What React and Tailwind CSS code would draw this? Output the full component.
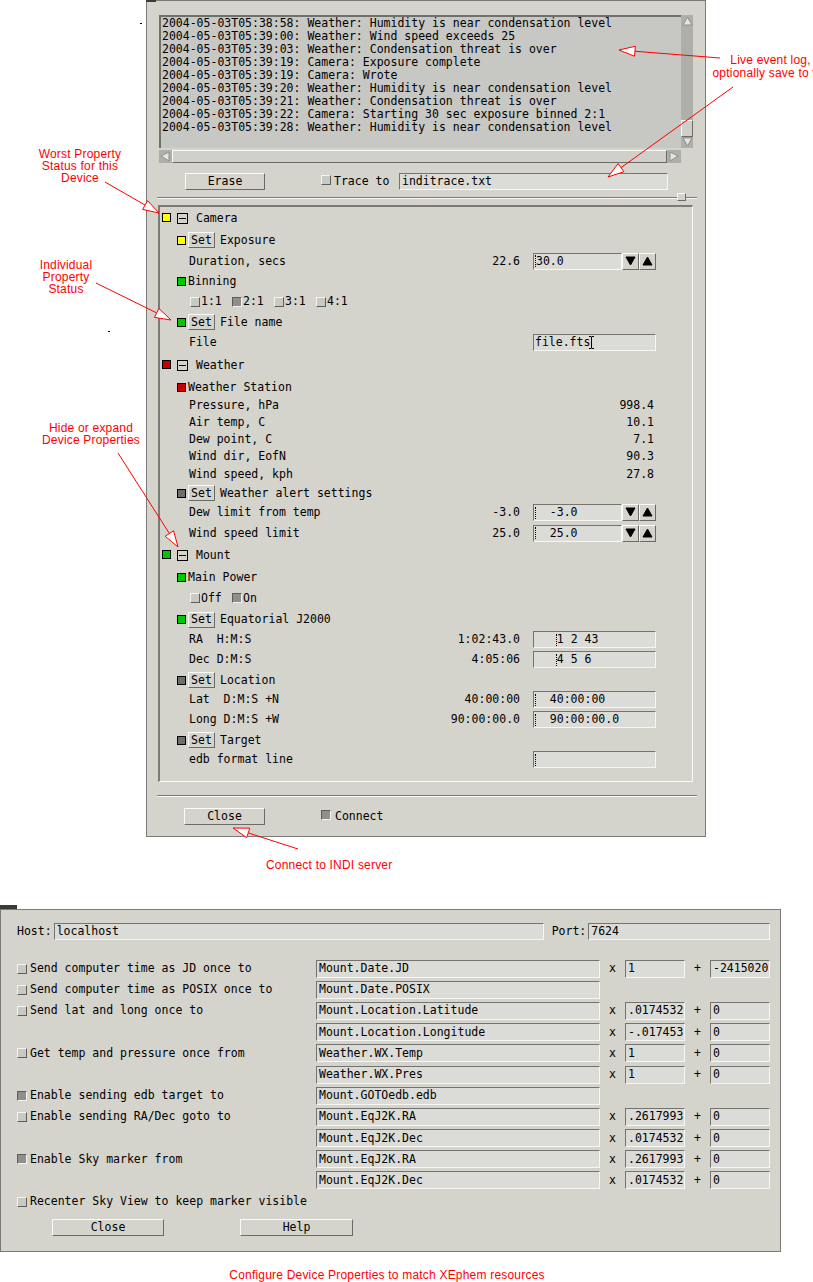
import React from 'react';

const raised = 'border border-t-[#fbfbf8] border-l-[#fbfbf8] border-r-[#6a6a66] border-b-[#6a6a66]';
const sunken = 'border border-t-[#73736f] border-l-[#73736f] border-r-[#f6f6f2] border-b-[#f6f6f2] bg-[#dbdbd7]';

const YELLOW = 'bg-[#ffff00]';
const GREEN = 'bg-[#00c800]';
const RED = 'bg-[#c80000]';
const GREY = 'bg-[#6e6e6e]';

const LOG = [
  '2004-05-03T05:38:58: Weather: Humidity is near condensation level',
  '2004-05-03T05:39:00: Weather: Wind speed exceeds 25',
  '2004-05-03T05:39:03: Weather: Condensation threat is over',
  '2004-05-03T05:39:19: Camera: Exposure complete',
  '2004-05-03T05:39:19: Camera: Wrote',
  '2004-05-03T05:39:20: Weather: Humidity is near condensation level',
  '2004-05-03T05:39:21: Weather: Condensation threat is over',
  '2004-05-03T05:39:22: Camera: Starting 30 sec exposure binned 2:1',
  '2004-05-03T05:39:28: Weather: Humidity is near condensation level',
];

// rows of the property panel, top to bottom
const PROPS = [
  { t: 'device', h: 'h-[22px]', c: YELLOW, label: 'Camera' },
  { t: 'prop', h: 'h-[22px]', c: YELLOW, set: true, label: 'Exposure' },
  { t: 'elem', h: 'h-[20px]', label: 'Duration, secs', value: '22.6', input: '30.0', spin: true },
  { t: 'prop', h: 'h-[20px]', c: GREEN, label: 'Binning' },
  { t: 'opts', h: 'h-[21px]', opts: [['1:1', false], ['2:1', true], ['3:1', false], ['4:1', false]] },
  { t: 'prop', h: 'h-[20px]', c: GREEN, set: true, label: 'File name' },
  { t: 'elem', h: 'h-[21px]', label: 'File', input: 'file.fts', ibeam: true, nocaret: true },
  { t: 'device', h: 'h-[24px]', c: RED, label: 'Weather' },
  { t: 'prop', h: 'h-[20px]', c: RED, label: 'Weather Station' },
  { t: 'elem', h: 'h-[17px]', label: 'Pressure, hPa', value: '998.4' },
  { t: 'elem', h: 'h-[17px]', label: 'Air temp, C', value: '10.1' },
  { t: 'elem', h: 'h-[17px]', label: 'Dew point, C', value: '7.1' },
  { t: 'elem', h: 'h-[17px]', label: 'Wind dir, EofN', value: '90.3' },
  { t: 'elem', h: 'h-[18px]', label: 'Wind speed, kph', value: '27.8' },
  { t: 'prop', h: 'h-[20px]', c: GREY, set: true, label: 'Weather alert settings' },
  { t: 'elem', h: 'h-[19px]', label: 'Dew limit from temp', value: '-3.0', input: '  -3.0', spin: true },
  { t: 'elem', h: 'h-[22px]', label: 'Wind speed limit', value: '25.0', input: '  25.0', spin: true },
  { t: 'device', h: 'h-[23px]', c: GREEN, label: 'Mount' },
  { t: 'prop', h: 'h-[20px]', c: GREEN, label: 'Main Power' },
  { t: 'opts', h: 'h-[22px]', opts: [['Off', false], ['On', true]] },
  { t: 'prop', h: 'h-[21px]', c: GREEN, set: true, label: 'Equatorial J2000' },
  { t: 'elem', h: 'h-[19px]', label: 'RA  H:M:S', value: '1:02:43.0', pre: '   ', input: '1 2 43' },
  { t: 'elem', h: 'h-[21px]', label: 'Dec D:M:S', value: '4:05:06', pre: '   ', input: '4 5 6' },
  { t: 'prop', h: 'h-[20px]', c: GREY, set: true, label: 'Location' },
  { t: 'elem', h: 'h-[19px]', label: 'Lat  D:M:S +N', value: '40:00:00', input: '  40:00:00' },
  { t: 'elem', h: 'h-[21px]', label: 'Long D:M:S +W', value: '90:00:00.0', input: '  90:00:00.0' },
  { t: 'prop', h: 'h-[20px]', c: GREY, set: true, label: 'Target' },
  { t: 'elem', h: 'h-[19px]', label: 'edb format line', input: '' },
];

const LINKS = [
  { on: false, label: 'Send computer time as JD once to', field: 'Mount.Date.JD', mul: '1', add: '-2415020' },
  { on: false, label: 'Send computer time as POSIX once to', field: 'Mount.Date.POSIX' },
  { on: false, label: 'Send lat and long once to', field: 'Mount.Location.Latitude', mul: '.0174532', add: '0' },
  { field: 'Mount.Location.Longitude', mul: '-.017453', add: '0' },
  { on: false, label: 'Get temp and pressure once from', field: 'Weather.WX.Temp', mul: '1', add: '0' },
  { field: 'Weather.WX.Pres', mul: '1', add: '0' },
  { on: true, label: 'Enable sending edb target to', field: 'Mount.GOTOedb.edb' },
  { on: false, label: 'Enable sending RA/Dec goto to', field: 'Mount.EqJ2K.RA', mul: '.2617993', add: '0' },
  { field: 'Mount.EqJ2K.Dec', mul: '.0174532', add: '0' },
  { on: true, label: 'Enable Sky marker from', field: 'Mount.EqJ2K.RA', mul: '.2617993', add: '0' },
  { field: 'Mount.EqJ2K.Dec', mul: '.0174532', add: '0' },
  { on: false, label: 'Recenter Sky View to keep marker visible' },
];

function Toggle({ on }) {
  return (
    <span
      className={`inline-block w-[10px] h-[10px] shrink-0 border ${
        on
          ? 'bg-[#8f8f8b] border-t-[#5d5d5a] border-l-[#5d5d5a] border-b-[#f4f4f0] border-r-[#f4f4f0]'
          : 'bg-[#c9c9c4] border-t-[#f4f4f0] border-l-[#f4f4f0] border-b-[#5d5d5a] border-r-[#5d5d5a]'
      }`}
    />
  );
}

function Status({ c }) {
  return <span className={`inline-block w-[9px] h-[9px] shrink-0 border border-black ${c}`} />;
}

function Caret() {
  return <span className="inline-block w-px h-[12px] border-l border-dotted border-black" />;
}

function IBeam() {
  return (
    <svg width="7" height="15" viewBox="0 0 7 15" className="shrink-0 -ml-[2px]">
      <path d="M1 1.5h2M4 1.5h2M3.5 1.5v12M1 13.5h2M4 13.5h2" stroke="#000" strokeWidth="1" fill="none" />
    </svg>
  );
}

function Tri({ dir, solid }) {
  const pts = {
    up: '5.5,1 10,9 1,9',
    down: '1,1 10,1 5.5,9',
    left: '1,5 9,1 9,10',
    right: '9,5 1,1 1,10',
  }[dir];
  return (
    <svg width="11" height="11" viewBox="0 0 11 11">
      <polygon
        points={pts}
        fill={solid ? '#000' : '#e4e4e0'}
        stroke={solid ? '#000' : '#8e8e8a'}
        strokeWidth="1"
      />
    </svg>
  );
}

function PropRow({ r }) {
  if (r.t === 'device') {
    return (
      <div className={`flex items-center ${r.h}`}>
        <span className="ml-[2px]">
          <Status c={r.c} />
        </span>
        <span className="ml-[6px] w-[11px] h-[11px] border border-black flex items-center justify-center">
          <span className="w-[7px] h-px bg-black" />
        </span>
        <span className="ml-[8px]">{r.label}</span>
      </div>
    );
  }
  if (r.t === 'prop') {
    return (
      <div className={`flex items-center pl-[17px] ${r.h}`}>
        <Status c={r.c} />
        {r.set ? (
          <>
            <span className={`ml-[2px] w-[27px] h-[16px] ${raised} flex items-center justify-center`}>Set</span>
            <span className="ml-[5px]">{r.label}</span>
          </>
        ) : (
          <span className="ml-[2px]">{r.label}</span>
        )}
      </div>
    );
  }
  if (r.t === 'opts') {
    return (
      <div className={`flex items-center pl-[30px] ${r.h}`}>
        {r.opts.map(([l, on]) => (
          <span key={l} className="w-[42px] flex items-center">
            <Toggle on={on} />
            <span className="ml-px">{l}</span>
          </span>
        ))}
      </div>
    );
  }
  const hasInput = r.input !== undefined;
  return (
    <div className={`flex items-center ${r.h}`}>
      <div className={`flex justify-between pl-[29px] whitespace-pre ${hasInput ? 'w-[360px]' : 'w-[494px]'}`}>
        <span>{r.label}</span>
        <span>{r.value}</span>
      </div>
      {hasInput && (
        <div className="ml-[13px] flex">
          <div
            className={`${r.spin ? 'w-[89px]' : 'w-[123px]'} h-[17px] ${sunken} flex items-center pl-px whitespace-pre overflow-hidden`}
          >
            {r.pre && <span>{r.pre}</span>}
            {!r.nocaret && <Caret />}
            <span>{r.input}</span>
            {r.ibeam && <IBeam />}
          </div>
          {r.spin && (
            <>
              <span className={`w-[17px] h-[17px] ${raised} flex items-center justify-center`}>
                <Tri dir="down" solid />
              </span>
              <span className={`w-[17px] h-[17px] ${raised} flex items-center justify-center`}>
                <Tri dir="up" solid />
              </span>
            </>
          )}
        </div>
      )}
    </div>
  );
}

function Separator() {
  return <div className="ml-[10px] w-[540px] h-[2px] border-t border-t-[#7a7a76] border-b border-b-[#fafaf7]" />;
}

function DeviceWindow() {
  return (
    <div className="ml-[146px] w-[560px] h-[837px] bg-[#d4d3cc] border border-[#7a7a76] flex flex-col">
      {/* event log with scroll bars */}
      <div className="ml-[12px] mt-[14px]">
        <div className="flex">
          <div className="w-[522px] h-[133px] bg-[#c7c7c4] border-t-2 border-l-2 border-t-[#6f6f6b] border-l-[#6f6f6b] pl-[1px] whitespace-pre overflow-hidden">
            {LOG.map((l, i) => (
              <div key={i}>{l}</div>
            ))}
          </div>
          <div className="w-[12px] h-[133px] bg-[#afafaa] flex flex-col">
            <span className="h-[12px] flex items-center justify-center">
              <Tri dir="up" />
            </span>
            <span className="flex-1" />
            <span className={`h-[17px] bg-[#cfcfca] ${raised}`} />
            <span className="h-[11px] flex items-center justify-center">
              <Tri dir="down" />
            </span>
          </div>
        </div>
        <div className="mt-[2px] w-[522px] h-[13px] flex bg-[#afafaa]">
          <span className="w-[13px] flex items-center justify-center">
            <Tri dir="left" />
          </span>
          <span className={`flex-1 bg-[#d0d0cb] ${raised}`} />
          <span className="w-[14px] flex items-center justify-center">
            <Tri dir="right" />
          </span>
        </div>
      </div>

      <div className="mt-[10px] h-[17px] ml-[38px] flex items-center">
        <span className={`w-[80px] h-[17px] ${raised} flex items-center justify-center`}>Erase</span>
        <span className="ml-[56px]">
          <Toggle on={false} />
        </span>
        <span className="ml-[3px] w-[65px]">Trace to</span>
        <span className={`w-[269px] h-[17px] ${sunken} flex items-center pl-[2px]`}>inditrace.txt</span>
      </div>

      <div className="mt-[7px] relative">
        <Separator />
        <span className={`absolute left-[530px] -top-[4px] w-[9px] h-[8px] bg-[#d4d3cc] ${raised}`} />
      </div>

      {/* properties panel */}
      <div className="mt-[6px] ml-[11px] w-[535px] h-[577px] border-t-2 border-l-2 border-r border-b border-t-[#7a7a76] border-l-[#7a7a76] border-r-[#fafaf7] border-b-[#fafaf7] flex flex-col whitespace-nowrap">
        {PROPS.map((r, i) => (
          <PropRow key={i} r={r} />
        ))}
      </div>

      <div className="mt-[13px]">
        <Separator />
      </div>

      <div className="mt-[11px] h-[17px] ml-[37px] flex items-center">
        <span className={`w-[81px] h-[17px] ${raised} flex items-center justify-center`}>Close</span>
        <span className="ml-[56px]">
          <Toggle on />
        </span>
        <span className="ml-[4px]">Connect</span>
      </div>
    </div>
  );
}

function Box({ w, children }) {
  return <span className={`${w} h-[18px] ${sunken} flex items-center pl-[2px] whitespace-pre overflow-hidden`}>{children}</span>;
}

function ConfigWindow() {
  return (
    <div className="mt-[72px] w-[781px] h-[343px] bg-[#d4d3cc] border border-[#7a7a76] flex flex-col whitespace-pre">
      <div className="mt-[13px] pl-[16px] h-[17px] flex items-center">
        <span>Host:</span>
        <span className={`ml-[2px] w-[490px] h-[17px] ${sunken} flex items-center pl-[2px]`}>localhost</span>
        <span className="ml-[8px]">Port:</span>
        <span className={`ml-[2px] w-[182px] h-[17px] ${sunken} flex items-center pl-[2px]`}>7624</span>
      </div>

      <div className="mt-[18px] flex flex-col">
        {LINKS.map((r, i) => (
          <div key={i} className="h-[21.2px] flex items-center pl-[16px]">
            <div className="w-[299px] flex items-center">
              {r.label && (
                <>
                  <Toggle on={r.on} />
                  <span className="ml-[3px]">{r.label}</span>
                </>
              )}
            </div>
            {r.field && <Box w="w-[284px]">{r.field}</Box>}
            {r.mul && (
              <>
                <span className="w-[25px] text-center">x</span>
                <Box w="w-[60px]">{r.mul}</Box>
                <span className="w-[25px] text-center">+</span>
                <Box w="w-[60px]">{r.add}</Box>
              </>
            )}
          </div>
        ))}
      </div>

      <div className="mt-[6.6px] h-[17px] flex items-center">
        <span className={`ml-[51px] w-[112px] h-[17px] ${raised} flex items-center justify-center`}>Close</span>
        <span className={`ml-[76px] w-[113px] h-[17px] ${raised} flex items-center justify-center`}>Help</span>
      </div>
    </div>
  );
}

function Arrow({ x1, y1, x2, y2 }) {
  const dx = x2 - x1;
  const dy = y2 - y1;
  const len = Math.hypot(dx, dy);
  const ux = dx / len;
  const uy = dy / len;
  const L = 16;
  const W = 5;
  const bx = x2 - ux * L;
  const by = y2 - uy * L;
  const pts = `${x2},${y2} ${bx - uy * W},${by + ux * W} ${bx + uy * W},${by - ux * W}`;
  return (
    <g>
      <line x1={x1} y1={y1} x2={bx} y2={by} stroke="#ff0000" strokeWidth="1" />
      <polygon points={pts} fill="#ffffff" stroke="#ff0000" strokeWidth="1" />
    </g>
  );
}

function Notes() {
  const note = "absolute font-['Liberation_Sans',Arial,sans-serif] text-[12px] leading-[12px] tracking-[0.2px] text-[#ff0000] text-center whitespace-pre";
  return (
    <>
      <div className={`${note} left-[30px] top-[148px] w-[100px]`}>{'Worst Property\nStatus for this\nDevice'}</div>
      <div className={`${note} left-[16px] top-[259px] w-[100px]`}>{'Individual\nProperty\nStatus'}</div>
      <div className={`${note} left-[31px] top-[422px] w-[120px]`}>{'Hide or expand\nDevice Properties'}</div>
      <div className={`${note} left-[700px] top-[54px] w-[141px] leading-[13px]`}>{'Live event log,\noptionally save to file'}</div>
      <div className={`${note} left-[266px] top-[859px]`}>Connect to INDI server</div>

      <span className="absolute left-[108px] top-[331px] w-[2px] h-px bg-black" />
      <span className="absolute left-[140px] top-[23px] w-[2px] h-px bg-black" />
      <span className="absolute left-[146px] top-0 w-[10px] h-[2px] bg-[#3a3a3a]" />
      <span className="absolute left-0 top-[905px] w-[17px] h-[4px] bg-[#3a3a3a]" />

      <svg className="absolute left-0 top-0 pointer-events-none" width="813" height="1282" viewBox="0 0 813 1282">
        <Arrow x1={105} y1={182} x2={159} y2={213} />
        <Arrow x1={96} y1={283} x2={171} y2={320} />
        <Arrow x1={118} y1={453} x2={178} y2={547} />
        <Arrow x1={720} y1={58} x2={619} y2={50} />
        <Arrow x1={733} y1={87} x2={608} y2={177} />
        <Arrow x1={298} y1={849} x2={233} y2={828} />
      </svg>
    </>
  );
}

export default function App() {
  return (
    <div className="relative w-[813px] h-[1282px] overflow-hidden bg-white text-black font-['DejaVu_Sans_Mono',monospace] text-[11.5px] leading-[13px]">
      <DeviceWindow />
      <ConfigWindow />
      <p className="mt-[16px] w-[774px] text-center font-['Liberation_Sans',Arial,sans-serif] text-[12px] leading-[14px] tracking-[0.2px] text-[#ff0000]">
        Configure Device Properties to match XEphem resources
      </p>
      <Notes />
    </div>
  );
}
